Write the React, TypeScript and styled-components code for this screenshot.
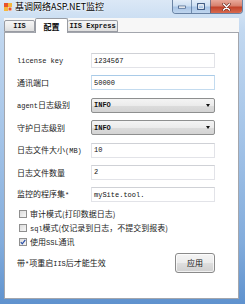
import React from 'react';
import styled, { createGlobalStyle } from 'styled-components';

const GlobalStyle = createGlobalStyle`
  html, body {
    margin: 0;
    padding: 0;
    overflow: hidden;
    background: #ffffff;
  }
`

const Window = styled.div`
  width: 245px;
  height: 304px;
  display: flex;
  flex-direction: column;
  box-sizing: border-box;
  background: linear-gradient(180deg, #dbe8f6 0%, #c2d8f0 10%, #a4c4e8 45%, #82acdc 80%, #5f92ce 100%);
  font-family: "Noto Sans CJK SC", sans-serif;
  color: #000;
`

const TitleBar = styled.div`
  height: 18px;
  display: flex;
  align-items: flex-start;
  padding-left: 4px;
`

const AppIcon = styled.svg`
  margin-top: 3px;
  width: 8px;
  height: 8px;
  flex-shrink: 0;
`

const Title = styled.div`
  margin-left: 3px;
  font-size: 9px;
  line-height: 14px;
  white-space: nowrap;
  text-shadow: 0 0 3px #fff, 0 0 2px #fff;
`

const CaptionButtons = styled.div`
  margin-left: auto;
  margin-right: 2px;
  display: flex;
  height: 13px;
  border: 1px solid rgba(60, 90, 130, 0.7);
  border-top: none;
  border-radius: 0 0 4px 4px;
  overflow: hidden;
`

const CaptionButton = styled.div<{ $close?: boolean }>`
  width: ${p => (p.$close ? 31 : 18)}px;
  display: flex;
  align-items: center;
  justify-content: center;
  border-left: ${p => (p.$close ? '1px solid rgba(60,90,130,0.6)' : 'none')};
  & + & { border-left: 1px solid rgba(60, 90, 130, 0.6); }
  background: ${p =>
    p.$close
      ? 'linear-gradient(180deg, #e9a99b 0%, #d7816e 45%, #c2432b 55%, #d86a4f 100%)'
      : 'linear-gradient(180deg, #e4eef9 0%, #cddff2 45%, #a9c5e6 55%, #bfd5ee 100%)'};
`

const Client = styled.div`
  flex: 1;
  display: flex;
  flex-direction: column;
  margin: 0 6px 5px 4px;
  background: #f7f7f7;
`

const TabStrip = styled.div`
  height: 14px;
  display: flex;
  align-items: flex-end;
`

const Tab = styled.div<{ $w: number; $active?: boolean }>`
  box-sizing: border-box;
  width: ${p => p.$w}px;
  height: ${p => (p.$active ? 15 : 12)}px;
  margin-bottom: ${p => (p.$active ? -1 : 0)}px;
  position: relative;
  z-index: ${p => (p.$active ? 2 : 1)};
  display: flex;
  align-items: center;
  justify-content: center;
  border: 1px solid #999ca3;
  border-bottom: ${p => (p.$active ? 'none' : '1px solid #999ca3')};
  border-left: ${p => (p.$active ? '1px solid #999ca3' : 'none')};
  &:first-child { border-left: 1px solid #999ca3; }
  border-radius: 2px 2px 0 0;
  background: ${p => (p.$active ? '#ffffff' : 'linear-gradient(180deg, #f6f6f6 0%, #ececec 50%, #dedede 100%)')};
  font-family: "Liberation Mono", "Noto Sans CJK SC", monospace;
  font-size: ${p => (p.$active ? 8 : 7)}px;
  font-weight: bold;
  white-space: nowrap;
  color: #111;
`

const Panel = styled.div`
  flex: 1;
  box-sizing: border-box;
  background: #ffffff;
  border: 1px solid #a3a6ad;
  padding: 20px 23px 0 12px;
  display: flex;
  flex-direction: column;
`

const FormGrid = styled.div`
  display: grid;
  grid-template-columns: 74px 124px;
  grid-auto-rows: 15px;
  row-gap: 7.4px;
  align-items: center;
`

const Label = styled.div`
  font-size: 8px;
  line-height: 15px;
  white-space: nowrap;
  color: #1a1a1a;
`

const Latin = styled.span`
  font-family: "Liberation Mono", monospace;
  font-size: 7px;
`

const TextBox = styled.div<{ $hover?: boolean }>`
  box-sizing: border-box;
  height: 15px;
  display: flex;
  align-items: center;
  padding-left: 2px;
  background: #fff;
  border: 1px solid ${p => (p.$hover ? '#c3dbef' : '#e2e3e8')};
  border-top-color: ${p => (p.$hover ? '#a9cbe8' : '#cfd1d6')};
  font-family: "Liberation Mono", monospace;
  font-size: 7px;
  color: #111;
`

const Dropdown = styled.div`
  box-sizing: border-box;
  height: 15px;
  display: flex;
  align-items: center;
  justify-content: space-between;
  padding: 0 4px 0 2px;
  border: 1px solid #8e8f8f;
  border-radius: 2px;
  background: linear-gradient(180deg, #f4f4f4 0%, #ebebeb 50%, #dcdcdc 52%, #d3d3d3 100%);
  font-family: "Liberation Mono", monospace;
  font-size: 7px;
  font-weight: bold;
  color: #111;
`

const Arrow = styled.div`
  width: 0;
  height: 0;
  border-left: 2.5px solid transparent;
  border-right: 2.5px solid transparent;
  border-top: 3px solid #111;
`

const CheckList = styled.div`
  margin-top: 4.6px;
  display: flex;
  flex-direction: column;
`

const CheckRow = styled.div`
  height: 14px;
  display: flex;
  align-items: center;
  gap: 3px;
  padding-left: 2px;
  font-size: 8px;
  white-space: nowrap;
  color: #1a1a1a;
`

const Box = styled.div`
  box-sizing: border-box;
  width: 8px;
  height: 8px;
  border: 1px solid #8f8f8f;
  background: linear-gradient(135deg, #dcdcdc 0%, #f6f6f6 100%);
  display: flex;
  align-items: center;
  justify-content: center;
  flex-shrink: 0;
`

const Footer = styled.div`
  margin-top: 4px;
  height: 20px;
  display: flex;
  align-items: center;
  justify-content: space-between;
`

const Note = styled.div`
  font-size: 8px;
  white-space: nowrap;
  color: #1a1a1a;
`

const ApplyButton = styled.div`
  box-sizing: border-box;
  width: 40px;
  height: 20px;
  display: flex;
  align-items: center;
  justify-content: center;
  border: 1px solid #8a8a8a;
  border-radius: 3px;
  background: linear-gradient(180deg, #f4f4f4 0%, #ececec 50%, #dedede 52%, #d0d0d0 100%);
  box-shadow: inset 0 0 0 1px rgba(255, 255, 255, 0.7);
  font-size: 8px;
  color: #111;
`

type Field = { label: React.ReactNode; value: string; kind: 'text' | 'select'; hover?: boolean };

const fields: Field[] = [
  { label: <Latin>license key</Latin>, value: '1234567', kind: 'text' },
  { label: '通讯端口', value: '50000', kind: 'text', hover: true },
  { label: <><Latin>agent</Latin>日志级别</>, value: 'INFO', kind: 'select' },
  { label: '守护日志级别', value: 'INFO', kind: 'select' },
  { label: <>日志文件大小<Latin>(MB)</Latin></>, value: '10', kind: 'text' },
  { label: '日志文件数量', value: '2', kind: 'text' },
  { label: <>监控的程序集<Latin>*</Latin></>, value: 'mySite.tool.', kind: 'text' },
];

const checks = [
  { label: '审计模式(打印数据日志)', checked: false },
  { label: <><Latin>sql</Latin>模式(仅记录到日志，不提交到报表)</>, checked: false },
  { label: <>使用<Latin>SSL</Latin>通讯</>, checked: true },
];

const App = (): JSX.Element => {
  return (
    <>
      <GlobalStyle />
      <Window>
        <TitleBar>
          <AppIcon viewBox="0 0 8 8">
            <rect x="0" y="0" width="8" height="8" fill="#f4f4f4" />
            <rect x="0" y="0" width="4" height="4" fill="#e8532b" />
            <rect x="4" y="0" width="4" height="4" fill="#f6b73c" />
            <rect x="0" y="4" width="4" height="4" fill="#f6b73c" />
            <rect x="4.5" y="4.5" width="3" height="3" fill="#e8532b" />
          </AppIcon>
          <Title>基调网络ASP.NET监控</Title>
          <CaptionButtons>
            <CaptionButton>
              <svg width="8" height="4" viewBox="0 0 8 4">
                <rect x="0.5" y="1" width="7" height="2.2" fill="#fff" stroke="#34507a" strokeWidth="0.7" />
              </svg>
            </CaptionButton>
            <CaptionButton>
              <svg width="8" height="7" viewBox="0 0 8 7">
                <rect x="0.8" y="0.8" width="6.4" height="5.4" fill="none" stroke="#34507a" strokeWidth="1.4" />
                <rect x="1.6" y="1.6" width="4.8" height="3.8" fill="none" stroke="#fff" strokeWidth="0.8" />
              </svg>
            </CaptionButton>
            <CaptionButton $close>
              <svg width="9" height="8" viewBox="0 0 9 8">
                <path d="M1.5 1 L7.5 7 M7.5 1 L1.5 7" stroke="#6b2a20" strokeWidth="2.6" strokeLinecap="round" />
                <path d="M1.5 1 L7.5 7 M7.5 1 L1.5 7" stroke="#fff" strokeWidth="1.5" strokeLinecap="round" />
              </svg>
            </CaptionButton>
          </CaptionButtons>
        </TitleBar>
        <Client>
          <TabStrip>
            <Tab $w={31}>IIS</Tab>
            <Tab $w={33} $active>配置</Tab>
            <Tab $w={50}>IIS Express</Tab>
          </TabStrip>
          <Panel>
            <FormGrid>
              {fields.map((f, i) => (
                <React.Fragment key={i}>
                  <Label>{f.label}</Label>
                  {f.kind === 'text' ? (
                    <TextBox $hover={f.hover}>{f.value}</TextBox>
                  ) : (
                    <Dropdown>
                      {f.value}
                      <Arrow />
                    </Dropdown>
                  )}
                </React.Fragment>
              ))}
            </FormGrid>
            <CheckList>
              {checks.map((c, i) => (
                <CheckRow key={i}>
                  <Box>
                    {c.checked && (
                      <svg width="6" height="6" viewBox="0 0 6 6">
                        <path d="M0.8 3.2 L2.3 4.8 L5.3 0.9" fill="none" stroke="#2a4fa8" strokeWidth="1.2" />
                      </svg>
                    )}
                  </Box>
                  <span>{c.label}</span>
                </CheckRow>
              ))}
            </CheckList>
            <Footer>
              <Note>带<Latin>*</Latin>项重启<Latin>IIS</Latin>后才能生效</Note>
              <ApplyButton>应用</ApplyButton>
            </Footer>
          </Panel>
        </Client>
      </Window>
    </>
  );
};

export default App;
